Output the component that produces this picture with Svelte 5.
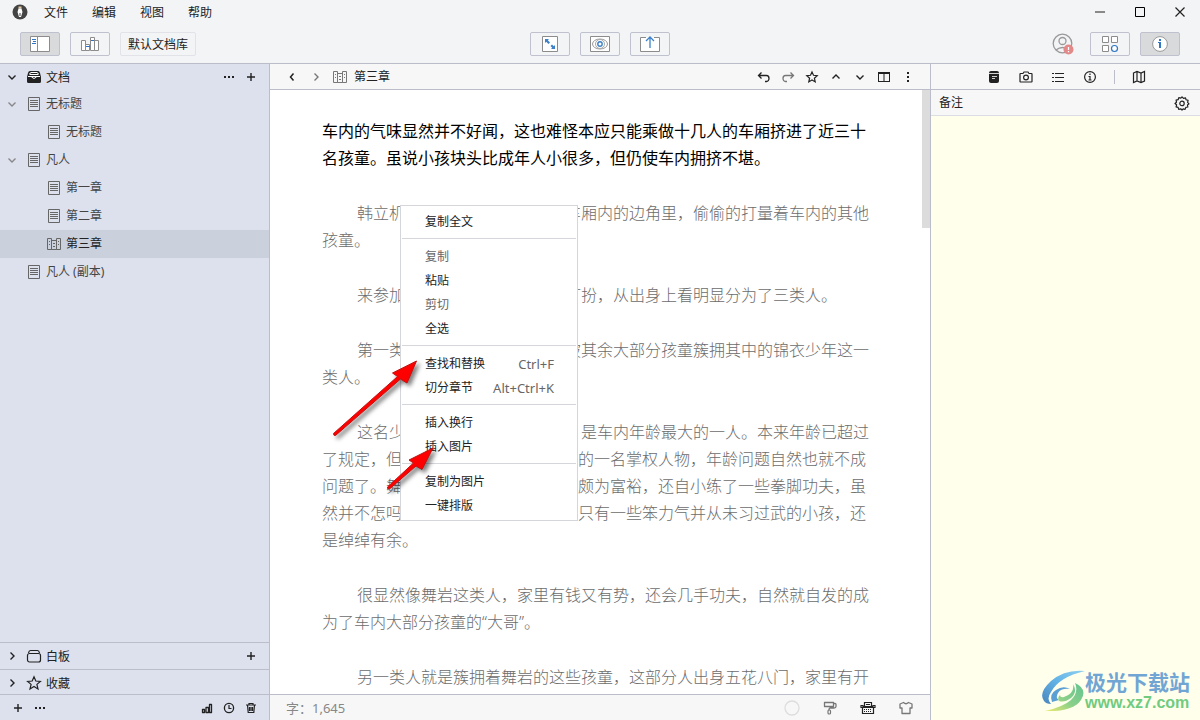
<script lang="ts">
  type Node = { title: string; depth: number; kind: 'doc' | 'book'; open?: boolean };

  const menus = ['文件', '编辑', '视图', '帮助'];

  const tree: Node[] = [
    { title: '无标题', depth: 0, kind: 'doc', open: true },
    { title: '无标题', depth: 1, kind: 'doc' },
    { title: '凡人', depth: 0, kind: 'doc', open: true },
    { title: '第一章', depth: 1, kind: 'doc' },
    { title: '第二章', depth: 1, kind: 'doc' },
    { title: '第三章', depth: 1, kind: 'book' },
    { title: '凡人 (副本)', depth: 0, kind: 'doc' },
  ];

  const editorTools = [
    { icon: 'undo', label: '撤销' },
    { icon: 'redo', label: '重做', dim: true },
    { icon: 'star-small', label: '收藏' },
    { icon: 'up', label: '上一篇' },
    { icon: 'down', label: '下一篇' },
    { icon: 'split', label: '分栏' },
    { icon: 'more', label: '更多' },
  ];

  const paragraphs = [
    '韩立机警的一个人悄悄地坐在车厢内的边角里，偷偷的打量着车内的其他孩童。',
    '来参加这次测试的孩童从穿着打扮，从出身上看明显分为了三类人。',
    '第一类自然就是坐在车中间，被其余大部分孩童簇拥其中的锦衣少年这一类人。',
    '这名少年姓舞名岩，今年十三，是车内年龄最大的一人。本来年龄已超过了规定，但他的表姐嫁给了七玄门里的一名掌权人物，年龄问题自然也就不成问题了。舞岩家中开着一间武馆家境颇为富裕，还自小练了一些拳脚功夫，虽然并不怎吗高明，但对付像韩立这样只有一些笨力气并从未习过武的小孩，还是绰绰有余。',
    '很显然像舞岩这类人，家里有钱又有势，还会几手功夫，自然就自发的成为了车内大部分孩童的“大哥”。',
    '另一类人就是簇拥着舞岩的这些孩童，这部分人出身五花八门，家里有开',
  ];

  const contextMenu: { label: string; keys?: string; disabled?: boolean }[][] = [
    [{ label: '复制全文' }],
    [
      { label: '复制', disabled: true },
      { label: '粘贴' },
      { label: '剪切', disabled: true },
      { label: '全选' },
    ],
    [
      { label: '查找和替换', keys: 'Ctrl+F' },
      { label: '切分章节', keys: 'Alt+Ctrl+K' },
    ],
    [{ label: '插入换行' }, { label: '插入图片' }],
    [{ label: '复制为图片' }, { label: '一键排版' }],
  ];

  let selected = $state(5);
  let notes = $state('');
</script>

{#snippet icon(name: string)}
  <svg class="icon" viewBox="0 0 16 16" width="16" height="16" aria-hidden="true">
    {#if name === 'down'}
      <path d="M4.500 6.500 8 10l3.500-3.500" stroke-width="1.400" />
    {:else if name === 'up'}
      <path d="M4.500 9.500 8 6l3.500 3.500" stroke-width="1.400" />
    {:else if name === 'left'}
      <path d="M9.500 4.500 6.500 8l3 3.500" stroke-width="1.500" />
    {:else if name === 'right'}
      <path d="M6.500 4.500 10 8l-3.500 3.500" stroke-width="1.400" />
    {:else if name === 'plus'}
      <path d="M8 4v8M4 8h8" stroke-width="1.400" />
    {:else if name === 'dots'}
      <path class="solid" d="M3 7h2v2H3zM7 7h2v2H7zM11 7h2v2h-2z" />
    {:else if name === 'more'}
      <path class="solid" d="M7 3h2v2H7zM7 7h2v2H7zM7 11h2v2H7z" />
    {:else if name === 'doc'}
      <path d="M2.500 1.500h11v13h-11zM4 4.500h8M4 6.500h8M4 8.500h8M4 10.500h8" />
    {:else if name === 'book'}
      <path d="M1.500 2.500h4v11h-4zM10.500 2.500h4v11h-4zM5.500 4.500h5v9h-5zM7 7.500h2M7 10.500h2M3.500 5v1M3.500 8v1M12.500 5v1M12.500 8v1" />
    {:else if name === 'archive'}
      <path class="solid" d="M4 2h8q1.500 0 2 2l1 4v4.500a1.500 1.500 0 0 1-1.500 1.500h-11A1.500 1.500 0 0 1 1 12.500V8l1-4q.5-2 2-2z" />
      <path class="cut" d="M3.500 5.500q.5-2 1.500-2h6q1 0 1.500 2M4 5.500h8M2 7.500h12M5.500 8q2.500 3 5 0" />
    {:else if name === 'board'}
      <rect x="1.500" y="5.500" width="13" height="8.500" rx="2" stroke-width="1.200" />
      <path d="M2.500 5q.5-2.500 2-2.500h7q1.500 0 2 2.500" stroke-width="1.200" />
    {:else if name === 'star'}
      <path d="m8 1.800 1.800 4.200 4.600.4-3.500 3 1.100 4.500L8 11.500l-4 2.400 1.100-4.500-3.500-3 4.600-.4z" stroke-width="1.200" />
    {:else if name === 'star-small'}
      <path d="m8 3 1.500 3.300 3.700.4-2.800 2.500.8 3.700L8 11l-3.200 1.900.8-3.700-2.800-2.500 3.700-.4z" stroke-width="1.200" />
    {:else if name === 'chart'}
      <path d="M3.500 9.500h2v3h-2zM7 7.500h2.500v5H7zM10.500 4.500h2v8h-2z" stroke-width="1.300" stroke-linejoin="round" />
    {:else if name === 'clock'}
      <circle cx="8" cy="8" r="4.600" stroke-width="1.300" />
      <path d="M8 5v3.500h2.500" stroke-width="1.200" />
    {:else if name === 'trash'}
      <path d="M3 5h10M6 4.500v-1h4v1M4.500 5l.7 7.500h5.600l.7-7.500M6.500 7v4M8 7v4M9.500 7v4" stroke-width="1.200" />
    {:else if name === 'undo'}
      <path d="M5.500 3.500 2.500 6.500l3 3M2.500 6.500h8a2.500 3 0 0 1 0 6H9" stroke-width="1.300" />
    {:else if name === 'redo'}
      <path d="m10.500 3.500 3 3-3 3M13.500 6.500h-8a2.500 3 0 0 0 0 6H7" stroke-width="1.300" />
    {:else if name === 'split'}
      <path class="solid" fill-rule="evenodd" d="M2 3h12v10H2zM3 5v7h4.500V5zM8.500 5v7H13V5z" />
    {:else if name === 'note'}
      <rect class="solid" x="3" y="2" width="10" height="12" rx="2" />
      <path class="cut" d="M3 4.500h10M6 7.500h5M6 9.500h3" stroke-width=".8" />
    {:else if name === 'camera'}
      <path d="M2.500 4.500h2.500l1-1.500h4l1 1.500h2.500q.5 0 .5.500v7.500q0 .5-.5.500h-11q-.5 0-.5-.5V5q0-.5.5-.5z" stroke-width="1.200" />
      <circle cx="8" cy="8.500" r="2.400" stroke-width="1.200" />
    {:else if name === 'list'}
      <path d="M2 4.500h2M2 8.500h2M2 12.500h2M5 4.500h9M5 8.500h9M5 12.500h9" stroke-width="1.200" />
    {:else if name === 'info'}
      <circle cx="8" cy="8" r="5.400" stroke-width="1.200" />
      <path d="M8 4.500v1.500M6.500 7.500H8V11M6.500 11h3" stroke-width="1.200" />
    {:else if name === 'map'}
      <path d="m2.500 4 3.500-1.500L10 4l3.500-1.500V12L10 13.500 6 12l-3.500 1.500zM6 2.500V12M10 4v9.500" stroke-width="1.200" />
    {:else if name === 'gear'}
      <path d="m8 1.800 1.500 1.500 2-.5.6 2 2 .6-.5 2L15 8.800l-1.500 1.200.3 2-2 .4-.7 2-2-.5L8 15l-1.300-1.200-2 .5-.6-2-2-.5.500-2L1 8.500l1.500-1.300-.4-2 2-.5.700-2 2 .500z" stroke-width="1.200" stroke-linejoin="round" />
      <circle cx="8" cy="8.400" r="2.200" stroke-width="1.200" />
    {:else if name === 'ring'}
      <circle cx="8" cy="8" r="7" stroke-width="1.300" />
    {:else if name === 'roller'}
      <path d="M2.500 2.500h9v4h-9zM11.500 3.500H13q1 0 1 1v2q0 1.500-2 1.500H8q-1 0-1 2" stroke-width="1.300" stroke-linejoin="round" />
      <rect x="6" y="10" width="2.500" height="4" rx="1" stroke-width="1.200" />
    {:else if name === 'typewriter'}
      <path d="M4.500 6V2.500h7V6M2.500 7.500h11v6h-11zM1 5.500h2v2H1zM13 5.500h2v2h-2zM3 6.500h10M6 4.500h4" stroke-width="1.200" />
      <path d="M4 9.500h8M4 11.500h8" stroke-dasharray="1 1" />
    {:else if name === 'shirt'}
      <path d="M5.500 2.500q2.500 2.500 5 0l3.500 1.500v4h-2v5.500H4V8H2V4z" stroke-width="1.300" stroke-linejoin="round" />
    {/if}
  </svg>
{/snippet}

<div class="app">
  <header>
    <div class="titlebar">
      <svg class="logo" viewBox="0 0 16 16" width="16" height="16" aria-hidden="true">
        <circle cx="8" cy="8" r="7.500" fill="#444" />
        <path d="M6.500 2.500h3v2h-3z" fill="#e2c9a0" />
        <path d="M6.500 4.500h3L10.500 8 9 13H7L5.500 8z" fill="#fff" />
        <path d="M8 9v3" stroke="#444" />
      </svg>
      <nav class="menubar">
        {#each menus as menu}
          <button type="button">{menu}</button>
        {/each}
      </nav>
      <div class="window-buttons">
        <button type="button" aria-label="最小化">
          <svg viewBox="0 0 12 12" width="12" height="12"><path d="M1 6h10" stroke="#666" stroke-width="1.500" /></svg>
        </button>
        <button type="button" aria-label="最大化">
          <svg viewBox="0 0 12 12" width="12" height="12"><path d="M1.500 1.500h9v9h-9z" fill="none" stroke="#000" /></svg>
        </button>
        <button type="button" aria-label="关闭">
          <svg viewBox="0 0 12 12" width="12" height="12"><path d="m1.500 1.500 9 9m0-9-9 9" stroke="#222" stroke-width="1.200" /></svg>
        </button>
      </div>
    </div>

    <div class="toolbar">
      <div class="group">
        <button type="button" class="tool active" aria-label="侧栏">
          <svg viewBox="0 0 20 16" width="20" height="16">
            <path d="M.5.500h19v15H.5z" fill="#fff" stroke="#8c8c8c" />
            <path d="M7.500 1v14" stroke="#8c8c8c" />
            <path d="M2 3.500h4M3 5.500h3M2 7.500h4" stroke="#2f77c4" />
          </svg>
        </button>
        <button type="button" class="tool" aria-label="文库">
          <svg viewBox="0 0 20 16" width="20" height="16" fill="#fff" stroke="#8c8c8c">
            <path d="M1.500 4.500h4v10h-4zM5.500 8.500h4v6h-4zM10.500 1.500h4v13h-4zM14.500 4.500h4v10h-4z" />
            <path d="M6 10.500h4M11 4.500h3" stroke="#2f77c4" />
          </svg>
        </button>
        <button type="button" class="tool library">默认文档库</button>
      </div>
      <div class="group">
        <button type="button" class="tool" aria-label="全屏">
          <svg viewBox="0 0 16 16" width="16" height="16">
            <path d="M.5.500h15v15H.5z" fill="#fff" stroke="#8c8c8c" />
            <path d="M3 3h4L5.800 4.200 8 6.500 6.500 8 4.200 5.800 3 7zM13 13H9l1.200-1.200L8.500 10l1.500-1.500 1.800 1.700L13 9z" fill="#3d81c8" />
          </svg>
        </button>
        <button type="button" class="tool" aria-label="预览">
          <svg viewBox="0 0 20 16" width="20" height="16">
            <path d="M.5.500h19v15H.5z" fill="#fff" stroke="#8c8c8c" />
            <ellipse cx="10" cy="8" rx="7.500" ry="5" fill="none" stroke="#999" />
            <circle cx="10" cy="8" r="4.500" fill="none" stroke="#aaa" />
            <circle cx="10" cy="8" r="2.200" fill="none" stroke="#3d81c8" stroke-width="1.400" />
          </svg>
        </button>
        <button type="button" class="tool" aria-label="导出">
          <svg viewBox="0 0 20 18" width="20" height="18">
            <path d="M6 2.500H.5v14h19v-14H14" fill="#fff" stroke="#8c8c8c" />
            <path d="M10 13V2M6 6l4-4 4 4" fill="none" stroke="#3d81c8" stroke-width="1.300" />
          </svg>
        </button>
      </div>
      <div class="group end">
        <button type="button" class="avatar" aria-label="账号">
          <svg viewBox="0 0 22 22" width="22" height="22" fill="none" stroke="#999">
            <circle cx="10.500" cy="10.500" r="9.300" stroke-width="1.300" />
            <circle cx="10.500" cy="8" r="3.500" stroke-width="1.300" />
            <path d="M4 17q6.500-5 13 0" stroke-width="1.300" />
            <circle cx="16.500" cy="16.500" r="5" fill="#e28a8a" stroke="none" />
            <path d="M16.500 14v3M16.500 18v1.200" stroke="#fff" stroke-width="1.300" />
          </svg>
        </button>
        <button type="button" class="tool" aria-label="面板">
          <svg viewBox="0 0 18 18" width="18" height="18" fill="#fff" stroke="#8c8c8c">
            <path d="M1.500 1.500h6v6h-6zM10.500 1.500h6v6h-6zM1.500 10.500h6v6h-6z" />
            <circle cx="13.500" cy="13.500" r="3" stroke="#2f77c4" stroke-width="1.200" />
          </svg>
        </button>
        <button type="button" class="tool active" aria-label="信息">
          <svg viewBox="0 0 16 16" width="16" height="16">
            <circle cx="8" cy="8" r="7.400" fill="#fff" stroke="#999" />
            <path d="M7 3h2v2H7zM6 6h3v6H7V7H6z" fill="#2f77c4" />
          </svg>
        </button>
      </div>
    </div>
  </header>

  <div class="body">
    <aside class="sidebar">
      <div class="section">
        <button type="button" class="row">
          {@render icon('down')}
          {@render icon('archive')}
          <span class="name">文档</span>
        </button>
        <button type="button" class="mini" aria-label="更多">{@render icon('dots')}</button>
        <button type="button" class="mini" aria-label="新建文档">{@render icon('plus')}</button>
      </div>
      <div class="tree">
        {#each tree as node, i}
          <button
            type="button"
            class="row node"
            class:nested={node.depth > 0}
            class:selected={i === selected}
            onclick={() => (selected = i)}
          >
            <span class="twisty">{#if node.open}{@render icon('down')}{/if}</span>
            {@render icon(node.kind)}
            <span>{node.title}</span>
          </button>
        {/each}
      </div>
      <div class="section lined">
        <button type="button" class="row">
          {@render icon('right')}
          {@render icon('board')}
          <span class="name">白板</span>
        </button>
        <button type="button" class="mini" aria-label="新建白板">{@render icon('plus')}</button>
      </div>
      <div class="section lined last">
        <button type="button" class="row">
          {@render icon('right')}
          {@render icon('star')}
          <span class="name">收藏</span>
        </button>
      </div>
      <footer class="side-footer">
        <button type="button" class="mini" aria-label="新建">{@render icon('plus')}</button>
        <button type="button" class="mini" aria-label="更多">{@render icon('dots')}</button>
        <span class="spacer"></span>
        <button type="button" class="mini" aria-label="统计">{@render icon('chart')}</button>
        <button type="button" class="mini" aria-label="历史">{@render icon('clock')}</button>
        <button type="button" class="mini" aria-label="回收站">{@render icon('trash')}</button>
      </footer>
    </aside>

    <main>
      <div class="editor-bar">
        <button type="button" aria-label="后退">{@render icon('left')}</button>
        <button type="button" class="dim" aria-label="前进">{@render icon('right')}</button>
        <h1><span class="dim">{@render icon('book')}</span>第三章</h1>
        <span class="spacer"></span>
        {#each editorTools as tool}
          <button type="button" class:dim={tool.dim} aria-label={tool.label}>{@render icon(tool.icon)}</button>
        {/each}
      </div>

      <div class="page">
        <article>
          <p class="current">
            车内的气味显然并不好闻，这也难怪本应只能乘做十几人的车厢挤进了近三十名孩童。虽说小孩块头比成年人小很多，但仍使车内拥挤不堪。
          </p>
          {#each paragraphs as text}
            <p>{text}</p>
          {/each}
        </article>
        <div class="scrollbar"></div>

        <div class="context-menu" role="menu">
          {#each contextMenu as group}
            <div class="menu-group">
              {#each group as item}
                <button type="button" role="menuitem" disabled={item.disabled}>
                  {item.label}
                  {#if item.keys}<kbd>{item.keys}</kbd>{/if}
                </button>
              {/each}
            </div>
          {/each}
        </div>

        <svg class="arrows" viewBox="0 0 120 150" width="120" height="150" aria-hidden="true">
          <path d="M5.500 82.500 69.500 25.500 64.500 22 88.500 10 79 32 72.500 28 7.500 84.500q-2 .5-2-2z" />
          <path d="M59.500 136 85.500 112 81 109 105 97 94 118.500 88 115 61.500 138q-2.500.5-2-2z" />
        </svg>
      </div>

      <footer class="status">
        <span>字：1,645</span>
        <span class="spacer"></span>
        <button type="button" class="faint" aria-label="进度">{@render icon('ring')}</button>
        <button type="button" class="dim" aria-label="格式">{@render icon('roller')}</button>
        <button type="button" aria-label="打字机模式">{@render icon('typewriter')}</button>
        <button type="button" class="dim" aria-label="主题">{@render icon('shirt')}</button>
      </footer>
    </main>

    <aside class="inspector">
      <div class="tabs">
        <button type="button" aria-label="备注">{@render icon('note')}</button>
        <button type="button" aria-label="快照">{@render icon('camera')}</button>
        <button type="button" aria-label="大纲">{@render icon('list')}</button>
        <button type="button" aria-label="信息">{@render icon('info')}</button>
        <span class="divider"></span>
        <button type="button" aria-label="地图">{@render icon('map')}</button>
      </div>
      <div class="notes-head">
        <label for="notes">备注</label>
        <button type="button" aria-label="设置">{@render icon('gear')}</button>
      </div>
      <textarea id="notes" bind:value={notes}></textarea>
      <div class="watermark">
        <svg viewBox="0 0 44 42" width="44" height="42" aria-hidden="true">
          <defs>
            <linearGradient id="sky" x1="1" y1="0" x2="0" y2="1">
              <stop offset="0" stop-color="#8fd0f0" />
              <stop offset=".5" stop-color="#62b2e6" />
              <stop offset="1" stop-color="#4a85bd" />
            </linearGradient>
            <linearGradient id="leaf" x1="1" y1="0" x2="0" y2="1">
              <stop offset="0" stop-color="#62c391" />
              <stop offset=".55" stop-color="#8bd08a" />
              <stop offset="1" stop-color="#f0ea6c" />
            </linearGradient>
          </defs>
          <path d="M44 1Q24-1 10 11-3 23 3 31q2 3 7 3-5-5 0-12Q18 7 44 1z" fill="url(#sky)" />
          <path d="M11 32q-3-8 4-12 7-5 14-1-9-1-12 4-3 5 1 7z" fill="#5b9fd4" />
          <path d="M32 14q5 8-2 14-7 5-12 3-2-3 1-6 0 3 4 2 11-4 9-13zM34 13q13 6 6 17-8 12-36 11 18-4 26-11 8-8 4-17z" fill="url(#leaf)" />
        </svg>
        <div>
          <strong>极光下载站</strong>
          <span>www.xz7.com</span>
        </div>
      </div>
    </aside>
  </div>
</div>

<style>
  :global(body) {
    margin: 0;
  }
  .app {
    display: flex;
    flex-direction: column;
    height: 100vh;
    overflow: hidden;
    background: #f3f4f6;
    color: #222;
    font-family: 'Noto Sans', 'Noto Sans CJK SC', sans-serif;
    font-size: 12px;
    line-height: 16px;
  }
  button {
    display: flex;
    align-items: center;
    justify-content: center;
    margin: 0;
    padding: 0;
    border: none;
    background: none;
    color: inherit;
    font: inherit;
  }
  svg {
    display: block;
    flex: none;
  }
  .icon {
    fill: none;
    stroke: currentColor;
  }
  .icon .solid {
    fill: currentColor;
    stroke: none;
  }
  .icon .cut {
    stroke: #fff;
  }
  .spacer {
    flex: 1;
  }
  .dim {
    color: #777;
  }
  .faint {
    color: #ddd;
  }

  header {
    border-bottom: 1px solid #bcbdcb;
  }
  .titlebar {
    display: flex;
    align-items: center;
    height: 24px;
    padding-left: 12px;
  }
  .menubar {
    display: flex;
    flex: 1;
    gap: 24px;
    padding: 2px 0 0 16px;
  }
  .window-buttons {
    display: flex;
  }
  .window-buttons button {
    width: 40px;
    height: 24px;
  }
  .toolbar {
    display: grid;
    grid-template-columns: 1fr auto 1fr;
    padding: 8px 20px 7px;
  }
  .group {
    display: flex;
    gap: 10px;
  }
  .end {
    justify-content: flex-end;
  }
  .tool {
    box-sizing: border-box;
    width: 40px;
    height: 24px;
    border: 1px solid #bfc1cf;
    border-radius: 2px;
  }
  .tool.active {
    background: #d9dadc;
  }
  .tool.library {
    width: 76px;
    padding-top: 2px;
    border-color: #e2e3e8;
  }
  .avatar {
    margin-right: 6px;
  }

  .body {
    display: flex;
    flex: 1;
    min-height: 0;
  }
  .sidebar {
    display: flex;
    flex-direction: column;
    flex: none;
    width: 269px;
    border-right: 1px solid #bcbdcb;
    background: #dce1ed;
  }
  .section {
    display: flex;
    align-items: center;
    height: 26px;
    padding-right: 7px;
  }
  .section.lined {
    border-top: 1px solid #bcbdcb;
  }
  .section.last {
    box-sizing: border-box;
    height: 25px;
    padding-top: 2px;
  }
  .row {
    flex: 1;
    justify-content: flex-start;
    padding-left: 4px;
  }
  .row > :nth-child(2) {
    margin: 0 4px 0 6px;
  }
  .name {
    padding-top: 2px;
  }
  .tree {
    flex: 1;
    min-height: 0;
    color: #444;
  }
  .node {
    width: 100%;
    height: 28px;
  }
  .node :global(svg) {
    color: #666;
  }
  .node .twisty :global(svg) {
    color: #888;
  }
  .nested {
    padding-left: 24px;
  }
  .selected {
    background: #cad0dc;
    color: #222;
  }
  .twisty {
    width: 16px;
    height: 16px;
  }
  .mini {
    width: 22px;
    height: 22px;
  }
  .side-footer {
    display: flex;
    align-items: center;
    height: 25px;
    padding: 0 7px;
    border-top: 1px solid #bcbdcb;
  }

  main {
    display: flex;
    flex-direction: column;
    flex: 1;
    min-width: 0;
    background: #fff;
  }
  .editor-bar {
    display: flex;
    align-items: center;
    height: 25px;
    padding: 0 10px;
    border-bottom: 1px solid #bcbdcb;
    background: #f7f7f7;
  }
  .editor-bar button {
    width: 24px;
    height: 24px;
  }
  h1 {
    display: flex;
    gap: 6px;
    margin: 0 0 0 4px;
    font-size: 12px;
    font-weight: 400;
  }
  .page {
    position: relative;
    flex: 1;
    min-height: 0;
    overflow: hidden;
  }
  article {
    max-width: 548px;
    margin: 0 auto;
    padding: 28px 8px 0 0;
    font-family: 'Noto Sans', 'Noto Sans CJK SC', sans-serif;
    font-size: 16px;
    line-height: 27px;
  }
  p {
    margin: 0 0 28px;
    color: #6c6c6c;
    font-weight: 300;
    text-indent: 35px;
  }
  p.current {
    color: #000;
    font-weight: 400;
    text-indent: 0;
  }
  .scrollbar {
    position: absolute;
    top: 0;
    right: 0;
    width: 8px;
    height: 138px;
    background: #dcdcdc;
  }
  .context-menu {
    position: absolute;
    top: 115px;
    left: 130px;
    box-sizing: border-box;
    width: 178px;
    padding: 4px 1px 2px;
    border: 1px solid #d5d5dc;
    background: #fff;
  }
  .menu-group + .menu-group {
    margin-top: 4px;
    padding-top: 6px;
    border-top: 1px solid #d5d5dc;
  }
  .context-menu button {
    justify-content: space-between;
    width: 100%;
    height: 24px;
    padding: 0 22px 0 23px;
  }
  .context-menu button:disabled {
    color: #666;
  }
  kbd {
    color: #666;
    font-family: inherit;
    font-size: 13px;
  }
  .arrows {
    position: absolute;
    top: 261px;
    left: 58px;
    fill: #fe0000;
    stroke: #c41010;
    stroke-width: 1;
    filter: drop-shadow(3px 3px 2px rgba(0, 0, 0, 0.5));
    pointer-events: none;
  }
  .status {
    display: flex;
    align-items: center;
    gap: 22px;
    height: 25px;
    padding: 0 16px;
    border-top: 1px solid #bcbdcb;
    background: #f7f7f7;
  }
  .status > span {
    color: #888;
    font-size: 13px;
  }

  .inspector {
    position: relative;
    display: flex;
    flex-direction: column;
    flex: none;
    width: 269px;
    border-left: 1px solid #bcbdcb;
    background: #f7f7f7;
  }
  .tabs {
    display: flex;
    align-items: center;
    justify-content: center;
    gap: 16px;
    height: 25px;
    padding-left: 2px;
    border-bottom: 1px solid #bcbdcb;
  }
  .divider {
    width: 1px;
    height: 14px;
    background: #bcbdcb;
  }
  .notes-head {
    display: flex;
    align-items: center;
    justify-content: space-between;
    height: 25px;
    padding: 0 10px 0 8px;
    border-bottom: 1px solid #dcdce4;
  }
  textarea {
    flex: 1;
    margin: 0;
    padding: 8px;
    border: none;
    outline: none;
    resize: none;
    background: #ffffeb;
    font: inherit;
  }
  .watermark {
    position: absolute;
    right: 10px;
    bottom: 8px;
    display: flex;
    align-items: center;
    pointer-events: none;
  }
  .watermark div {
    display: flex;
    flex-direction: column;
  }
  .watermark strong {
    color: #71a5d4;
    font-size: 21px;
    line-height: 24px;
  }
  .watermark span {
    color: #70cb80;
    font-family: 'Liberation Sans', sans-serif;
    font-size: 16px;
    line-height: 18px;
    font-weight: 700;
  }
</style>
